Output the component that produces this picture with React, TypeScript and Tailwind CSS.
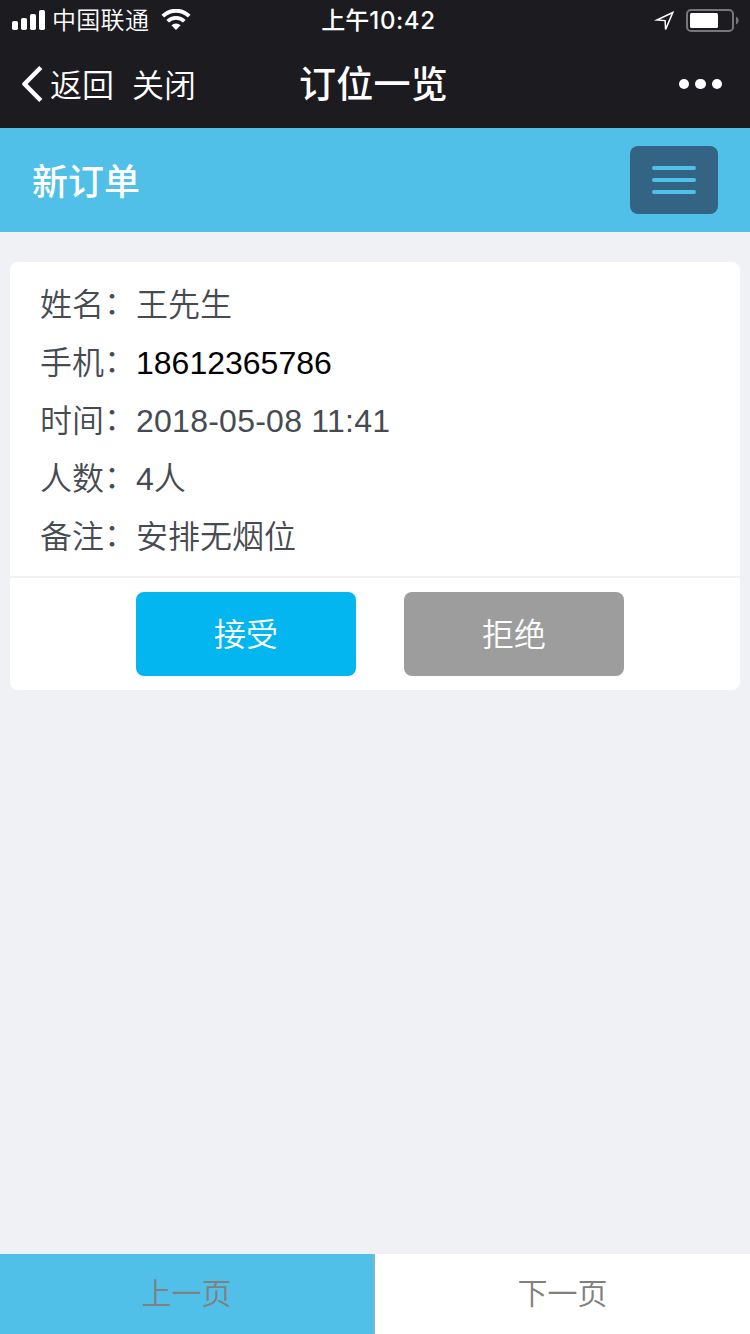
import type { ReactNode } from "react";

const order = {
	name: "王先生",
	phone: "18612365786",
	time: "2018-05-08 11:41",
	people: "4人",
	remark: "安排无烟位",
};

function StatusBar() {
	return (
		<div className="h-10 grid grid-cols-3 items-center pl-3 pr-[11px]">
			<div className="flex items-center">
				<svg width="33" height="20" viewBox="0 0 33 20" fill="currentColor">
					<rect x="0" y="11" width="6" height="9" rx="1.8" />
					<rect x="9" y="8" width="6" height="12" rx="1.8" />
					<rect x="18" y="4" width="6" height="16" rx="1.8" />
					<rect x="27" y="0" width="6" height="20" rx="1.8" />
				</svg>
				<span className="ml-[7px] pt-0.5 text-2xl leading-[38px] font-[350] tracking-[0.3px] whitespace-nowrap">中国联通</span>
				<svg className="ml-3" width="30" height="22" viewBox="0 0 30 22" fill="none" stroke="currentColor">
					<path d="M1.8 7.2a18.6 18.6 0 0 1 26.4 0" strokeWidth="3.9" />
					<path d="M6.7 12.2a11.8 11.8 0 0 1 16.6 0" strokeWidth="3.7" />
					<path d="M10.4 16.3a6.5 6.5 0 0 1 9.2 0L15 21z" fill="currentColor" stroke="none" />
				</svg>
			</div>
			<div className="text-center text-2xl leading-[38px] pt-0.5 font-medium whitespace-nowrap pl-1.5">
				上午<span className="font-['Inter'] tracking-[0.6px]">10:42</span>
			</div>
			<div className="flex items-center justify-end">
				<svg width="21" height="22" viewBox="0 0 21 22" fill="none" stroke="currentColor" strokeWidth="1.5">
					<path d="M18.8 3.5 2.8 11l8.3.6.5 8.8z" strokeLinejoin="miter" />
				</svg>
				<svg className="ml-[11px]" width="53" height="24" viewBox="0 0 53 24" fill="none">
					<rect x="1" y="2" width="46" height="21" rx="4" stroke="#77777b" strokeWidth="2" />
					<rect x="4" y="5" width="28" height="15" rx="1.5" fill="white" />
					<path d="M50 8.5c3.5 1.5 3.5 6.5 0 8z" fill="#77777b" />
				</svg>
			</div>
		</div>
	);
}

function NavBar() {
	return (
		<div className="h-[88px] grid grid-cols-[1fr_auto_1fr] items-center pl-[22px] pr-7">
			<div className="flex items-center text-[32px] leading-[84px] font-[350]">
				<svg width="21" height="36" viewBox="0 0 21 36" fill="none" stroke="currentColor" strokeWidth="4.5" strokeLinejoin="round">
					<path d="M18.8 1.5 2.5 18l16.3 16.5" />
				</svg>
				<span className="ml-[7px] pt-1">返回</span>
				<span className="ml-[18px] pt-1">关闭</span>
			</div>
			<h1 className="text-[37px] leading-[84px] pt-1 pl-[3px] font-medium tracking-[0.2px]">订位一览</h1>
			<div className="flex justify-end gap-1.5">
				<i className="size-[10.5px] rounded-full bg-white" />
				<i className="size-[10.5px] rounded-full bg-white" />
				<i className="size-[10.5px] rounded-full bg-white" />
			</div>
		</div>
	);
}

function Row({ label, children }: { label: string; children: ReactNode }) {
	return (
		<div className="flex h-[58px] leading-[58px] whitespace-nowrap">
			<span className="w-24 shrink-0 flex">
				{label}
				{/* colon sits at mid-height of the characters */}
				<span className="leading-[54px]">：</span>
			</span>
			<span>{children}</span>
		</div>
	);
}

export default function App() {
	return (
		<div className="w-[750px] h-[1334px] flex flex-col bg-[#eff1f5] font-['Liberation_Sans','Noto_Sans_CJK_SC',sans-serif]">
			<div className="h-32 bg-[#1c1b20] text-white">
				<StatusBar />
				<NavBar />
			</div>

			<header className="h-[104px] flex items-center justify-between px-8 bg-[#50c0e8] text-white">
				<h2 className="text-4xl leading-[98px] pt-1.5 font-medium">新订单</h2>
				<button className="w-[88px] h-[68px] rounded-lg bg-[#336483] flex flex-col items-center justify-center gap-2">
					<i className="w-11 h-1 rounded-[2px] bg-[#50c0e8]" />
					<i className="w-11 h-1 rounded-[2px] bg-[#50c0e8]" />
					<i className="w-11 h-1 rounded-[2px] bg-[#50c0e8]" />
				</button>
			</header>

			<main className="flex-1 px-2.5 pt-[30px]">
				<section className="bg-white rounded-lg text-[32px] font-[350] text-[#464b52]">
					<div className="h-[314px] px-[30px] pt-3.5">
						<Row label="姓名">{order.name}</Row>
						<Row label="手机">
							<a className="text-black">{order.phone}</a>
						</Row>
						<Row label="时间">
							<span className="tracking-[0.25px]">{order.time}</span>
						</Row>
						<Row label="人数">{order.people}</Row>
						<Row label="备注">{order.remark}</Row>
					</div>
					<div className="h-[114px] border-t-2 border-[#eff1f5] flex gap-12 pl-[126px] pt-3.5 text-white">
						<button className="w-[220px] h-[84px] pt-0.5 leading-[82px] rounded-lg bg-[#04b6f0]">接受</button>
						<button className="w-[220px] h-[84px] pt-0.5 leading-[82px] rounded-lg bg-[#9d9d9d]">拒绝</button>
					</div>
				</section>
			</main>

			<footer className="h-20 grid grid-cols-2 text-[30px] leading-[80px] font-[350] text-[#808080]">
				<button className="bg-[#50c0e8] border-r-2 border-[#7fb9cf]">上一页</button>
				<button className="bg-white">下一页</button>
			</footer>
		</div>
	);
}
